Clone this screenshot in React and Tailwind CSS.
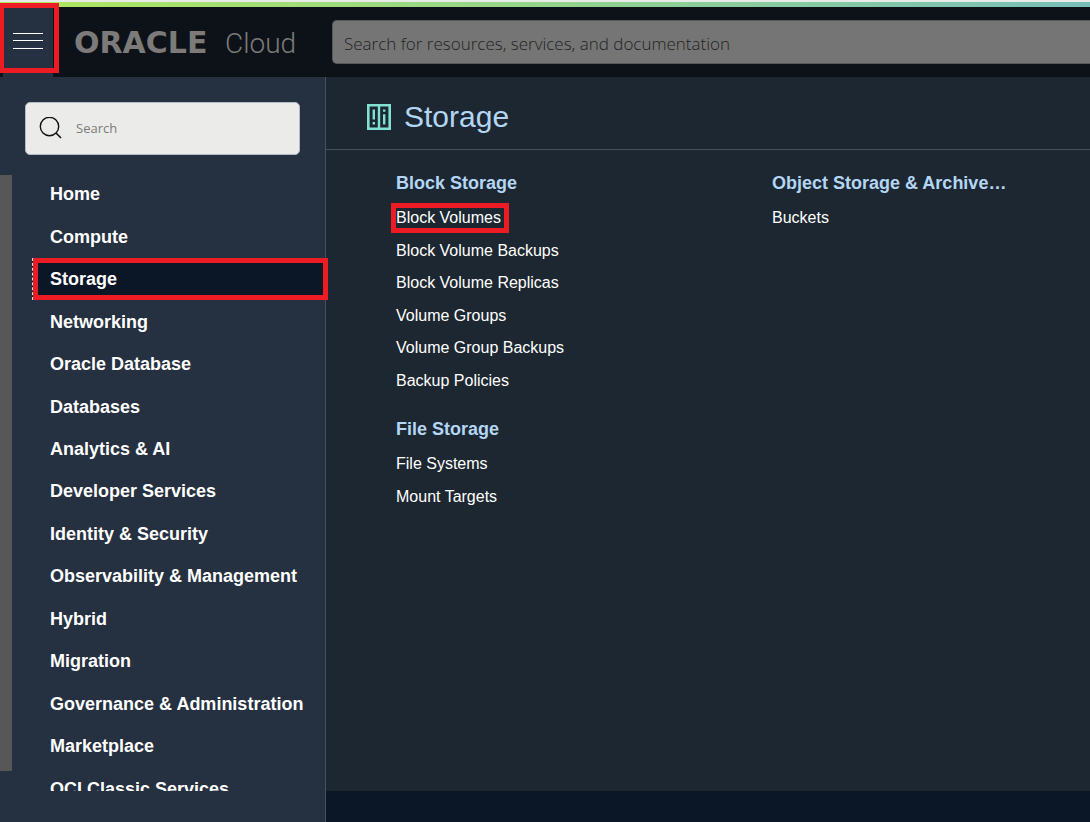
import React from "react";

const services = [
  "Home",
  "Compute",
  "Storage",
  "Networking",
  "Oracle Database",
  "Databases",
  "Analytics & AI",
  "Developer Services",
  "Identity & Security",
  "Observability & Management",
  "Hybrid",
  "Migration",
  "Governance & Administration",
  "Marketplace",
  "OCI Classic Services",
];

const blockLinks = [
  "Block Volumes",
  "Block Volume Backups",
  "Block Volume Replicas",
  "Volume Groups",
  "Volume Group Backups",
  "Backup Policies",
];

function Highlight({ className }) {
  return (
    <span
      aria-hidden="true"
      className={`pointer-events-none absolute border-5 border-[#ed1c24] ${className}`}
    />
  );
}

function StorageIcon() {
  return (
    <svg width="24" height="26" viewBox="0 0 24 26" fill="none" aria-hidden="true">
      <path
        fillRule="evenodd"
        d="M0 0H24V26H0Z M2.6 2.6V23.4H10.8V2.6Z M13.2 2.6V23.4H21.4V2.6Z"
        fill="#80e2d2"
      />
      <path
        d="M5.6 5.4H8V15.6H5.6Z M5.6 18H8V20.4H5.6Z M16 5.4H18.4V7.8H16Z M16 10.2H18.4V20.4H16Z"
        fill="#80e2d2"
      />
    </svg>
  );
}

function LinkGroup({ title, links, listClass, marked }) {
  return (
    <section>
      <h2 className="text-lg leading-6 font-bold text-[#b3d6f5]">{title}</h2>
      <ul className={`mt-[7px] grid auto-rows-fr ${listClass}`}>
        {links.map((label) => (
          <li key={label} className="flex items-center">
            <a href="#" className="relative text-base leading-5 text-white">
              {label}
              {label === marked && <Highlight className="-inset-y-[5px] -right-2 -left-[5px]" />}
            </a>
          </li>
        ))}
      </ul>
    </section>
  );
}

export default function App() {
  return (
    <div className="flex h-screen flex-col overflow-hidden bg-[#1d2731] font-['Liberation_Sans',Arial,sans-serif]">
      <div className="h-[7px] shrink-0 border-t-2 border-[#e8ebe8] bg-linear-to-r from-[#b0e85a] via-[#94d48c] to-[#78bfb8]" />
      <header className="relative flex h-[70px] shrink-0 items-center bg-[#0d1218] pl-[3px]">
        <button
          type="button"
          aria-label="Navigation menu"
          className="flex h-full w-[50px] items-center justify-center bg-[#253040]"
        >
          <svg width="30" height="20" viewBox="0 0 30 20" aria-hidden="true">
            <path d="M0 1.5H30 M0 8.5H30 M0 16.5H30" stroke="#fff" strokeWidth="1" />
          </svg>
        </button>
        <Highlight className="-top-1 -left-px h-[70px] w-[60px]" />
        <a href="#" className="ml-[21px] flex w-[258px] items-baseline pt-[2px] text-[#7c7b79]">
          <span className="w-[151px] font-['DejaVu_Sans',sans-serif] text-[30px] leading-8 font-bold">
            ORACLE
          </span>
          <span className="font-[Roboto,sans-serif] text-[28px] leading-8 font-light">Cloud</span>
        </a>
        <input
          type="search"
          aria-label="Search for resources, services, and documentation"
          placeholder="Search for resources, services, and documentation"
          className="h-11 min-w-0 flex-1 rounded-l-[5px] border border-r-0 border-[#57585e] bg-[#757575] px-[11px] pt-[2px] font-['Open_Sans',sans-serif] text-[17px] font-light text-[#222] outline-none placeholder:text-[#222]"
        />
      </header>

      <div className="flex min-h-0 flex-1">
        <aside className="relative z-10 flex w-[326px] shrink-0 flex-col border-r border-[#46505e] bg-[#253040] pt-[25px] pb-[31px]">
          <label className="mx-[25px] flex h-[53px] shrink-0 items-center gap-[13px] rounded-[5px] border border-[#b2bcc6] bg-[#ebebe9] pl-[13px]">
            <svg width="24" height="24" viewBox="0 0 24 24" fill="none" stroke="#111" aria-hidden="true">
              <circle cx="10.5" cy="9.5" r="9.2" strokeWidth="1.4" />
              <path d="M17 16L22 21" strokeWidth="1.6" />
            </svg>
            <input
              type="search"
              aria-label="Search"
              placeholder="Search"
              className="min-w-0 flex-1 bg-transparent pt-px font-['Open_Sans',sans-serif] text-[13px] text-[#333] outline-none placeholder:text-[#7c7b79]"
            />
          </label>

          <nav
            aria-label="Services"
            className="mt-[18px] flex min-h-0 flex-1 items-start overflow-x-visible overflow-y-clip"
          >
            <div className="mt-[2px] h-[596px] w-3 shrink-0 bg-[#575757]" />
            <ul className="ml-5 grid h-[637px] flex-1 auto-rows-fr">
              {services.map((label) => (
                <li key={label} className="relative">
                  {label === "Storage" ? (
                    <a
                      href="#"
                      aria-current="page"
                      className="flex h-full items-center border-l border-dashed border-[#b8f0e0] bg-[#0b1726] pl-[17px] text-lg font-bold text-white"
                    >
                      {label}
                      <Highlight className="inset-y-0 -right-[3px] left-px" />
                    </a>
                  ) : (
                    <a
                      href="#"
                      className="flex h-full items-center pl-[18px] text-lg font-bold whitespace-nowrap text-white"
                    >
                      {label}
                    </a>
                  )}
                </li>
              ))}
            </ul>
          </nav>
        </aside>

        <main className="flex min-w-0 flex-1 flex-col">
          <div className="flex h-[73px] shrink-0 items-center gap-[13px] border-b border-[#46505e] pt-2 pl-[41px]">
            <StorageIcon />
            <h1 className="text-[30px] leading-9 text-[#b3d6f5]">Storage</h1>
          </div>
          <div className="grid flex-1 grid-cols-[376px_1fr] content-start pt-[21px] pl-[70px]">
            <div className="flex flex-col gap-5">
              <LinkGroup
                title="Block Storage"
                links={blockLinks}
                listClass="h-[195px]"
                marked="Block Volumes"
              />
              <LinkGroup
                title="File Storage"
                links={["File Systems", "Mount Targets"]}
                listClass="h-[65px]"
              />
            </div>
            <LinkGroup title="Object Storage & Archive…" links={["Buckets"]} listClass="h-8" />
          </div>
          <footer className="h-[31px] shrink-0 bg-[#0b1726]" />
        </main>
      </div>
    </div>
  );
}
